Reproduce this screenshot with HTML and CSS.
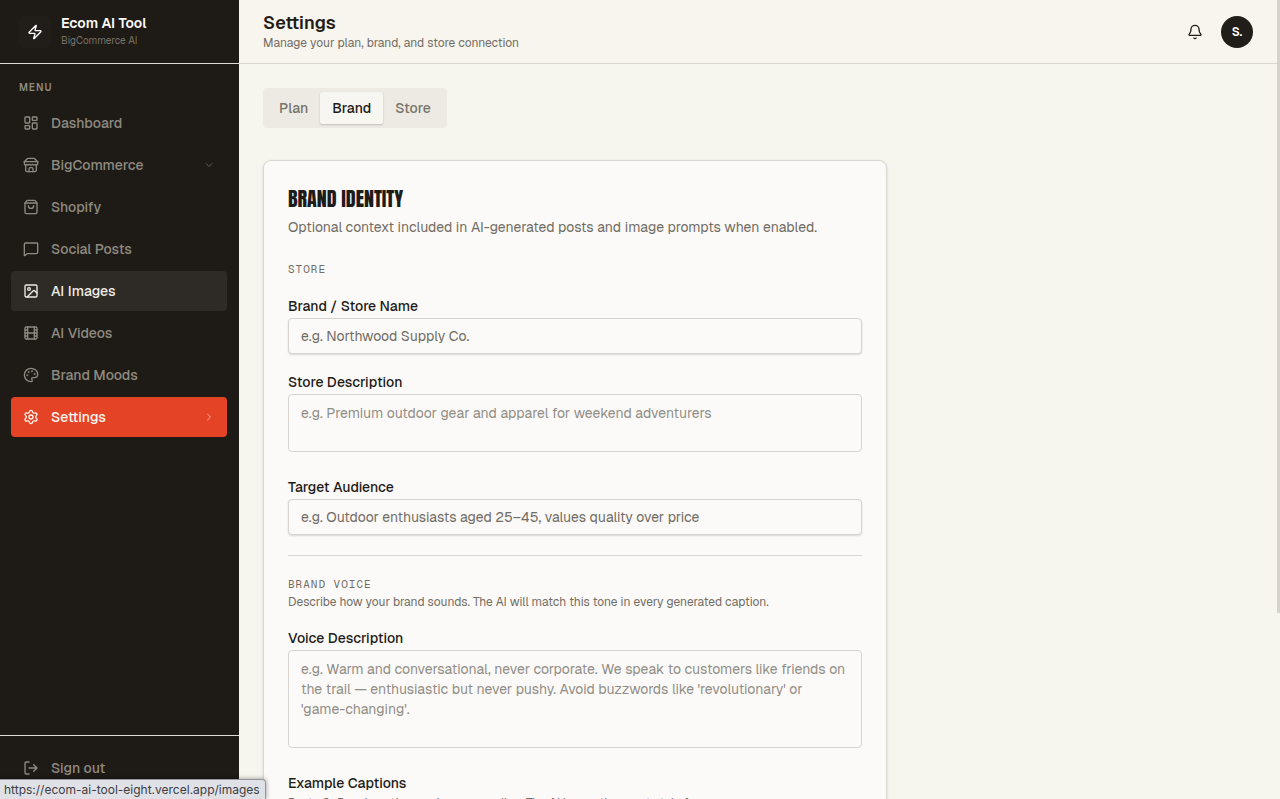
FILE: index.html
```html
<!DOCTYPE html>
<html lang="en">
<head>
<meta charset="utf-8">
<meta name="viewport" content="width=device-width, initial-scale=1">
<title>Settings – Ecom AI Tool</title>
<link rel="stylesheet" href="styles.css">
</head>
<body>
<div class="app">
  <aside class="sidebar">
    <div class="brand">
      <span class="brand-mark"><svg class="icon" viewBox="0 0 24 24"><path d="M4 14a1 1 0 0 1-.78-1.63l9.9-10.2a.5.5 0 0 1 .86.46l-1.92 6.02A1 1 0 0 0 13 10h7a1 1 0 0 1 .78 1.63l-9.9 10.2a.5.5 0 0 1-.86-.46l1.92-6.02A1 1 0 0 0 11 14z"/></svg></span>
      <div class="brand-text"><span class="brand-name">Ecom AI Tool</span><span class="brand-sub">BigCommerce AI</span></div>
    </div>
    <nav class="menu" aria-label="Menu">
      <span class="menu-title">MENU</span>
      <a class="item" href="#"><svg class="icon" viewBox="0 0 24 24"><rect width="7" height="9" x="3" y="3" rx="1"/><rect width="7" height="5" x="14" y="3" rx="1"/><rect width="7" height="9" x="14" y="12" rx="1"/><rect width="7" height="5" x="3" y="16" rx="1"/></svg>Dashboard</a>
      <a class="item" href="#"><svg class="icon" viewBox="0 0 24 24"><path d="m2 7 4.41-4.41A2 2 0 0 1 7.83 2h8.34a2 2 0 0 1 1.42.59L22 7"/><path d="M4 12v8a2 2 0 0 0 2 2h12a2 2 0 0 0 2-2v-8"/><path d="M15 22v-4a2 2 0 0 0-2-2h-2a2 2 0 0 0-2 2v4"/><path d="M2 7h20"/><path d="M22 7v3a2 2 0 0 1-2 2 2.7 2.7 0 0 1-1.59-.63.7.7 0 0 0-.82 0A2.7 2.7 0 0 1 16 12a2.7 2.7 0 0 1-1.59-.63.7.7 0 0 0-.82 0A2.7 2.7 0 0 1 12 12a2.7 2.7 0 0 1-1.59-.63.7.7 0 0 0-.82 0A2.7 2.7 0 0 1 8 12a2.7 2.7 0 0 1-1.59-.63.7.7 0 0 0-.82 0A2.7 2.7 0 0 1 4 12a2 2 0 0 1-2-2V7"/></svg>BigCommerce<svg class="icon chevron" viewBox="0 0 24 24"><path d="m6 9 6 6 6-6"/></svg></a>
      <a class="item" href="#"><svg class="icon" viewBox="0 0 24 24"><path d="M3.1 6.03h17.8"/><path d="M3.4 5.47A2 2 0 0 0 3 6.67V20a2 2 0 0 0 2 2h14a2 2 0 0 0 2-2V6.67a2 2 0 0 0-.4-1.2l-2-2.67A2 2 0 0 0 17 2H7a2 2 0 0 0-1.6.8z"/><path d="M16 10a4 4 0 0 1-8 0"/></svg>Shopify</a>
      <a class="item" href="#"><svg class="icon" viewBox="0 0 24 24"><path d="M21 3a1 1 0 0 1 1 1v13a2 2 0 0 1-2 2H6.83a2 2 0 0 0-1.42.59l-2.2 2.2A.71.71 0 0 1 2 21.29V5a2 2 0 0 1 2-2z"/></svg>Social Posts</a>
      <a class="item hovered" href="#"><svg class="icon" viewBox="0 0 24 24"><rect width="18" height="18" x="3" y="3" rx="2"/><circle cx="9" cy="9" r="2"/><path d="m21 15-3.09-3.09a2 2 0 0 0-2.82 0L6 21"/></svg>AI Images</a>
      <a class="item" href="#"><svg class="icon" viewBox="0 0 24 24"><rect width="18" height="18" x="3" y="3" rx="2"/><path d="M7 3v18M17 3v18M3 7.5h4M3 12h18M3 16.5h4M17 7.5h4M17 16.5h4"/></svg>AI Videos</a>
      <a class="item" href="#"><svg class="icon" viewBox="0 0 24 24"><path d="M12 22a1 1 0 0 1 0-20 10 9 0 0 1 10 9 5 5 0 0 1-5 5h-2.25a1.75 1.75 0 0 0-1.4 2.8l.3.4a1.75 1.75 0 0 1-1.4 2.8z"/><circle class="dot" cx="13.5" cy="6.5" r=".5"/><circle class="dot" cx="17.5" cy="10.5" r=".5"/><circle class="dot" cx="6.5" cy="12.5" r=".5"/><circle class="dot" cx="8.5" cy="7.5" r=".5"/></svg>Brand Moods</a>
      <a class="item active" href="#" aria-current="page"><svg class="icon" viewBox="0 0 24 24"><path d="M9.67 4.14a2.34 2.34 0 0 1 4.66 0 2.34 2.34 0 0 0 3.32 1.91 2.34 2.34 0 0 1 2.33 4.03 2.34 2.34 0 0 0 0 3.84 2.34 2.34 0 0 1-2.33 4.03 2.34 2.34 0 0 0-3.32 1.91 2.34 2.34 0 0 1-4.66 0 2.34 2.34 0 0 0-3.32-1.91 2.34 2.34 0 0 1-2.33-4.03 2.34 2.34 0 0 0 0-3.84 2.34 2.34 0 0 1 2.33-4.03 2.34 2.34 0 0 0 3.32-1.91"/><circle cx="12" cy="12" r="3"/></svg>Settings<svg class="icon chevron" viewBox="0 0 24 24"><path d="m9 18 6-6-6-6"/></svg></a>
    </nav>
    <div class="sidebar-foot">
      <button class="item" type="button"><svg class="icon" viewBox="0 0 24 24"><path d="m16 17 5-5-5-5M21 12H9M9 21H5a2 2 0 0 1-2-2V5a2 2 0 0 1 2-2h4"/></svg>Sign out</button>
    </div>
  </aside>
  <div class="main">
    <header class="topbar">
      <div class="heading"><h1 class="page-title">Settings</h1><p class="page-sub">Manage your plan, brand, and store connection</p></div>
      <div class="actions">
        <button class="bell" type="button" aria-label="Notifications"><svg class="icon" viewBox="0 0 24 24"><path d="M10.27 21a2 2 0 0 0 3.46 0"/><path d="M3.26 15.33A1 1 0 0 0 4 17h16a1 1 0 0 0 .74-1.67C19.41 13.96 18 12.5 18 8A6 6 0 0 0 6 8c0 4.5-1.41 5.96-2.74 7.33"/></svg></button>
        <button class="avatar" type="button">S.</button>
      </div>
    </header>
    <main class="content">
      <div class="tabs" role="tablist">
        <button class="tab" type="button" role="tab" aria-selected="false">Plan</button>
        <button class="tab selected" type="button" role="tab" aria-selected="true">Brand</button>
        <button class="tab" type="button" role="tab" aria-selected="false">Store</button>
      </div>
      <form class="card">
        <h2 class="card-title">BRAND IDENTITY</h2>
        <p class="card-sub">Optional context included in AI-generated posts and image prompts when enabled.</p>
        <section class="group">
          <h3 class="eyebrow">STORE</h3>
          <div class="field"><label for="name">Brand / Store Name</label><input id="name" type="text" placeholder="e.g. Northwood Supply Co."></div>
          <div class="field area"><label for="desc">Store Description</label><textarea id="desc" rows="2" placeholder="e.g. Premium outdoor gear and apparel for weekend adventurers"></textarea></div>
          <div class="field"><label for="audience">Target Audience</label><input id="audience" type="text" placeholder="e.g. Outdoor enthusiasts aged 25–45, values quality over price"></div>
        </section>
        <section class="group divided">
          <h3 class="eyebrow">BRAND VOICE</h3>
          <p class="hint">Describe how your brand sounds. The AI will match this tone in every generated caption.</p>
          <div class="field area"><label for="voice">Voice Description</label><textarea id="voice" rows="4" placeholder="e.g. Warm and conversational, never corporate. We speak to customers like friends on the trail — enthusiastic but never pushy. Avoid buzzwords like 'revolutionary' or 'game-changing'."></textarea></div>
          <div class="field"><label for="captions">Example Captions</label><p class="hint">Paste 2–5 real captions, using one per line. The AI learns the exact style from</p><textarea id="captions" rows="4"></textarea></div>
        </section>
      </form>
    </main>
    <div class="scroll-thumb"></div>
  </div>
  <div class="status">https://ecom-ai-tool-eight.vercel.app/images</div>
</div>
</body>
</html>
```
FILE: styles.css
```css
* { box-sizing: border-box; }
body { margin: 0; background: #f6f5ee; color: #1f1c18; font: 14px/20px Geist, "Geist Sans", Inter, "Liberation Sans", sans-serif; }
h1, h2, h3, p { margin: 0; }
button, input, textarea { font: inherit; }
button { border: 0; background: none; padding: 0; color: inherit; }
.app { display: flex; height: 100vh; overflow: hidden; position: relative; }
.icon { width: 16px; height: 16px; flex: none; fill: none; stroke: currentColor; stroke-width: 2; stroke-linecap: round; stroke-linejoin: round; }
.dot { fill: currentColor; }

.sidebar { width: 239px; flex: none; display: flex; flex-direction: column; background: #1e1a16; color: #8f8a80; }
.brand { height: 64px; padding: 0 19px; display: flex; align-items: center; gap: 10px; border-bottom: 1px solid #dfdbd4; }
.brand-mark { width: 32px; height: 32px; border-radius: 6px; background: #211e19; color: #fff; display: grid; place-items: center; }
.brand-text { display: flex; flex-direction: column; gap: 1px; }
.brand-name { color: #fbfaf7; font-weight: 600; line-height: 18px; }
.brand-sub { font-size: 10px; line-height: 16px; color: #777268; }
.menu { flex: 1; display: flex; flex-direction: column; gap: 2px; padding: 16px 12px 0 11px; }
.menu-title { font-size: 10px; line-height: 16px; font-weight: 600; letter-spacing: 1px; padding: 0 8px; margin-bottom: 5px; }
.item { display: flex; align-items: center; gap: 12px; width: 100%; height: 40px; padding: 0 12px; border-radius: 4px; color: inherit; font-weight: 500; text-decoration: none; }
.hovered { background: #2e2a26; color: #eeebe5; }
.active { background: #e54326; color: #fff5ef; }
.chevron { width: 12px; height: 12px; margin-left: auto; opacity: .6; }
.sidebar-foot { border-top: 1px solid #dfdbd4; padding: 12px 12px 11px 11px; }

.main { flex: 1; min-width: 0; position: relative; overflow: hidden; }
.topbar { height: 64px; display: flex; align-items: center; justify-content: space-between; padding: 0 27px 0 24px; background: #f8f5ee; border-bottom: 1px solid #d9d7d0; }
.heading { padding-bottom: 2px; }
.page-title { font-size: 18px; line-height: 24px; font-weight: 600; }
.page-sub, .hint { font-size: 12px; line-height: 16px; color: #716d64; }
.actions { display: flex; align-items: center; gap: 10px; }
.bell { width: 32px; height: 32px; display: grid; place-items: center; }
.avatar { width: 32px; height: 32px; border-radius: 50%; background: #211e19; color: #fff; font-size: 12px; font-weight: 600; }

.content { padding: 24px; }
.tabs { display: inline-flex; height: 40px; padding: 4px; border-radius: 4px; background: #edeae4; vertical-align: top; }
.tab { padding: 0 12px; border-radius: 2px; color: #77736a; font-weight: 500; }
.selected { background: #f8f6f0; color: #1f1c18; box-shadow: 0 1px 2px #0003; }
.card { max-width: 624px; margin-top: 32px; padding: 24px; border: 1px solid #dad8d2; border-radius: 8px; background: #fcfaf8; box-shadow: 0 1px 3px #0002; }
.card-title { font-family: Anton, "Liberation Sans Narrow", sans-serif; font-size: 20px; line-height: 28px; font-weight: 600; }
.card-sub { margin-top: 4px; color: #716d64; }
.group { margin-top: 24px; }
.divided { margin-top: 20px; padding-top: 20px; border-top: 1px solid #dad8d2; }
.eyebrow { font: 400 11px/16px "Geist Mono", "JetBrains Mono", "Liberation Mono", monospace; letter-spacing: 1px; color: #716d64; }
.eyebrow + .hint { margin-top: 2px; }
.field { display: flex; flex-direction: column; gap: 2px; margin-top: 18px; }
.eyebrow + .field { margin-top: 19px; }
.area + .field { margin-top: 25px; }
.field label { font-weight: 500; }
input, textarea { width: 100%; border: 1px solid #d6d4ce; border-radius: 4px; background: #fcfaf8; color: #1f1c18; }
input { height: 36px; padding: 0 12px; box-shadow: 0 1px 2px #0002; }
textarea { display: block; padding: 8px 12px; resize: none; overflow: hidden; }
input::placeholder { color: #716d64; opacity: 1; }
textarea::placeholder { color: #918e87; opacity: 1; }
.scroll-thumb { position: absolute; top: 0; right: 0; width: 3px; height: 613px; background: #d5d3cc; }
.status { position: absolute; left: 0; bottom: 0; height: 20px; padding: 0 5px 0 4px; border: 1px solid #96969a; border-left: 0; border-bottom: 0; border-top-right-radius: 4px; background: #e0e1e7; color: #3c3d41; font: 12px/19px Inter, sans-serif; box-shadow: 0 0 5px #0006; }
```
